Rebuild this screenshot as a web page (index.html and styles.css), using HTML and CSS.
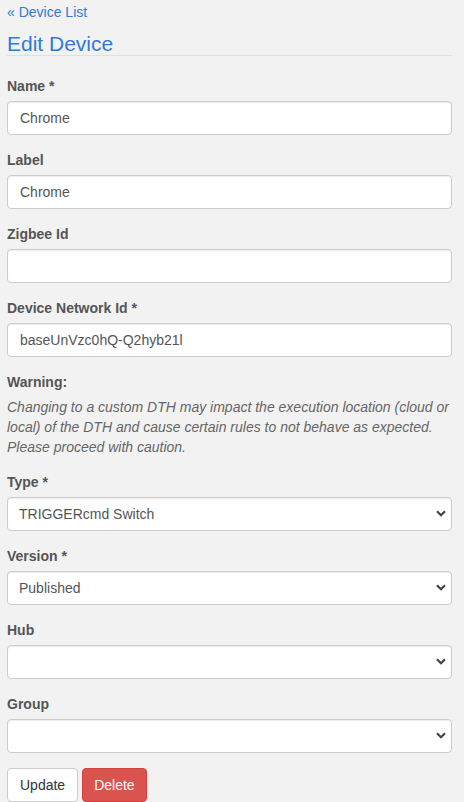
FILE: index.html
```html
<!DOCTYPE html>
<html>
<head>
<meta charset="utf-8">
<link rel="stylesheet" href="styles.css">
</head>
<body>
<div class="page">
  <a class="back" href="#">&laquo; Device List</a>
  <h1 class="title">Edit Device</h1>
  <form class="form">
    <div class="group">
      <label class="label">Name *</label>
      <input class="control" type="text" value="Chrome">
    </div>
    <div class="group">
      <label class="label">Label</label>
      <input class="control" type="text" value="Chrome">
    </div>
    <div class="group">
      <label class="label">Zigbee Id</label>
      <input class="control" type="text" value="">
    </div>
    <div class="group">
      <label class="label">Device Network Id *</label>
      <input class="control" type="text" value="baseUnVzc0hQ-Q2hyb21l">
    </div>
    <div class="group">
      <label class="label">Warning:</label>
      <p class="warning">Changing to a custom DTH may impact the execution location (cloud or local) of the DTH and cause certain rules to not behave as expected. Please proceed with caution.</p>
    </div>
    <div class="group">
      <label class="label">Type *</label>
      <div class="select-wrap">
        <select class="control select"><option>TRIGGERcmd Switch</option></select>
        <svg class="chev" width="10" height="7" viewBox="0 0 10 7"><path d="M1 1.2 L5 5.2 L9 1.2" fill="none" stroke="#444" stroke-width="2.2"/></svg>
      </div>
    </div>
    <div class="group">
      <label class="label">Version *</label>
      <div class="select-wrap">
        <select class="control select"><option>Published</option></select>
        <svg class="chev" width="10" height="7" viewBox="0 0 10 7"><path d="M1 1.2 L5 5.2 L9 1.2" fill="none" stroke="#444" stroke-width="2.2"/></svg>
      </div>
    </div>
    <div class="group">
      <label class="label">Hub</label>
      <div class="select-wrap">
        <select class="control select"><option></option></select>
        <svg class="chev" width="10" height="7" viewBox="0 0 10 7"><path d="M1 1.2 L5 5.2 L9 1.2" fill="none" stroke="#444" stroke-width="2.2"/></svg>
      </div>
    </div>
    <div class="group">
      <label class="label">Group</label>
      <div class="select-wrap">
        <select class="control select"><option></option></select>
        <svg class="chev" width="10" height="7" viewBox="0 0 10 7"><path d="M1 1.2 L5 5.2 L9 1.2" fill="none" stroke="#444" stroke-width="2.2"/></svg>
      </div>
    </div>
    <div class="buttons">
      <button type="button" class="btn btn-default">Update</button>
      <button type="button" class="btn btn-danger">Delete</button>
    </div>
  </form>
</div>
</body>
</html>
```

FILE: styles.css
```css
html, body {
  margin: 0;
  padding: 0;
  background: #f2f2f2;
}
body {
  font-family: "Liberation Sans", Arial, sans-serif;
  font-size: 14px;
  line-height: 20px;
  color: #555;
}
.page {
  padding: 2px 12px 0 7px;
}
.back {
  display: block;
  color: #2f7bd3;
  text-decoration: none;
  line-height: 20px;
}
.title {
  margin: 11px 0 20px;
  font-size: 21px;
  font-weight: normal;
  line-height: 22px;
  color: #2f7bd3;
  border-bottom: 1px solid #e0e0e0;
}
.form {
  margin: 0;
}
.group {
  margin-bottom: 15px;
}
.label {
  display: block;
  font-weight: bold;
  margin-bottom: 5px;
  color: #555;
}
.control {
  display: block;
  box-sizing: border-box;
  width: 100%;
  height: 34px;
  margin: 0;
  padding: 6px 12px;
  font-family: "Liberation Sans", Arial, sans-serif;
  font-size: 14px;
  color: #555;
  background: #fff;
  border: 1px solid #ccc;
  border-radius: 4px;
  box-shadow: inset 0 1px 1px rgba(0,0,0,.075);
  outline: none;
}
.warning {
  margin: 0;
  font-style: italic;
  color: #666;
  line-height: 20px;
}
.select-wrap {
  position: relative;
}
.select {
  appearance: none;
  -webkit-appearance: none;
  padding-left: 11px;
}
.chev {
  position: absolute;
  right: 6px;
  top: 13px;
  pointer-events: none;
}
.buttons {
  display: flex;
  gap: 4px;
}
.btn {
  height: 34px;
  padding: 6px 12px;
  font-family: "Liberation Sans", Arial, sans-serif;
  font-size: 14px;
  line-height: 20px;
  border: 1px solid #ccc;
  border-radius: 4px;
  cursor: pointer;
}
.btn-default {
  background: #fff;
  color: #333;
}
.btn-danger {
  background: #d9534f;
  border-color: #d43f3a;
  color: #fff;
  padding: 6px 11px;
}
```
